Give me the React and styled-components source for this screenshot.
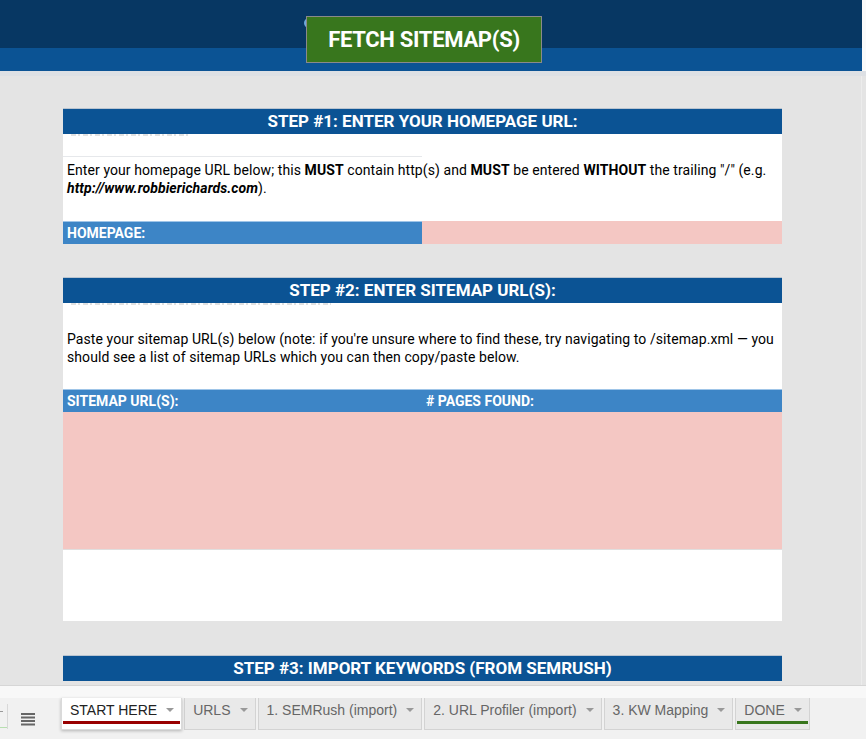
import React from "react";
import styled, { createGlobalStyle } from "styled-components";

const GlobalStyle = createGlobalStyle`
  html, body { margin: 0; padding: 0; }
  body { background: #e4e4e4; overflow: hidden; font-family: Roboto, "Liberation Sans", Arial, sans-serif; }
  * { box-sizing: border-box; }
`;

const Page = styled.div`
  width: 866px;
  height: 739px;
  display: flex;
  flex-direction: column;
  overflow: hidden;
`;

const Top = styled.header`
  position: relative;
  display: flex;
  flex-direction: column;
  width: 866px;
  padding-right: 4px;
  background: #fafafa;
`;

const DarkBand = styled.div`
  height: 48px;
  background: #073763;
`;

const BlueBand = styled.div`
  height: 23px;
  background: #0b5394;
`;

const TopRule = styled.div`
  height: 5px;
  background: #dde0e4;
  margin-right: -4px;
`;

const FetchButton = styled.button`
  position: absolute;
  left: 306px;
  top: 16px;
  width: 236px;
  height: 47px;
  background: #38761d;
  border: 1px solid #8a8a8a;
  color: #fff;
  font-family: Roboto, "Liberation Sans", sans-serif;
  font-weight: 700;
  font-size: 22px;
  letter-spacing: -0.3px;
  padding: 0;
  cursor: pointer;
`;

const Peek = styled.span`
  position: absolute;
  left: 304px;
  top: 18px;
  width: 6px;
  height: 10px;
  border-radius: 5px 0 0 5px;
  background: #6fa8dc;
`;

const Main = styled.main`
  flex: 1;
  display: flex;
  flex-direction: column;
  gap: 34px;
  padding: 32px 0 0 63px;
  background: #e4e4e4;
  border-bottom: 1px solid #d6d6d6;
  overflow: hidden;
  box-shadow: inset -4px 0 0 #e4e4e4, inset -5px 0 0 #ececec;
`;

const Card = styled.section`
  width: 719px;
  display: flex;
  flex-direction: column;
  flex-shrink: 0;
`;

const StepHeader = styled.h2`
  margin: 0;
  height: 26px;
  background: #0b5394;
  border-top: 1px solid #b9c4d0;
  color: #fff;
  font-size: 17px;
  font-weight: 700;
  text-align: center;
  line-height: 25px;
  flex-shrink: 0;
`;

const Body = styled.div`
  background: #fff;
  height: ${(p) => p.$h}px;
  display: flex;
  flex-direction: column;
`;

const Sliver = styled.div`
  height: 2px;
  width: ${(p) => p.$w}px;
  margin-left: 8px;
  background: repeating-linear-gradient(90deg, #d4d4d4 0 5px, transparent 5px 7px, #d4d4d4 7px 9px, transparent 9px 12px);
  opacity: 0.7;
`;

const GridLine = styled.div`
  height: 1px;
  width: 359px;
  background: #e6e8eb;
  margin-top: ${(p) => p.$top}px;
`;

const Para = styled.p`
  margin: ${(p) => p.$top}px 0 0;
  padding: 0 0 0 4px;
  font-size: 14px;
  line-height: 18px;
  color: #000;
  letter-spacing: 0.08px;
  b { font-weight: 700; }
  i { font-weight: 700; font-style: italic; }
`;

const Row = styled.div`
  display: grid;
  grid-template-columns: 359px 360px;
  height: ${(p) => p.$h}px;
`;

const Cell = styled.div`
  background: ${(p) => (p.$pink ? "#f4c7c3" : "#3d85c6")};
  color: #fff;
  font-size: 14px;
  font-weight: 700;
  padding: 0 4px;
  line-height: ${(p) => p.$h}px;
  border-top: ${(p) => (p.$line ? "1px solid #9fc5e8" : "none")};
`;

const PinkArea = styled.div`
  height: 138px;
  background: #f4c7c3;
  border-bottom: 1px solid #e0dede;
`;

const WhiteArea = styled.div`
  height: 71px;
  background: #fff;
`;

const Strip = styled.div`
  height: 13px;
  background: #f8f8f8;
  border-bottom: 1px solid #c9c9c9;
`;

const TabBar = styled.nav`
  height: 41px;
  background: #f1f1f1;
  display: flex;
  align-items: flex-start;
  margin-top: -1px;
  font-family: "Liberation Sans", Arial, sans-serif;
`;

const LeftTools = styled.div`
  width: 61px;
  height: 32px;
  display: flex;
  align-items: center;
  position: relative;
`;

const Sep = styled.div`
  width: 1px;
  height: 25px;
  background: #d8d8d8;
  margin: 5px 0 0 7px;
`;

const Plus = styled.span`
  position: absolute;
  left: 0;
  top: 13px;
  width: 3px;
  height: 1px;
  background: #999;
`;

const GreenBit = styled.span`
  position: absolute;
  left: 0;
  top: 29px;
  width: 7px;
  height: 1px;
  background: #b7dfb0;
`;

const Burger = styled.svg`
  margin: 9px 0 0 13px;
`;

const Tabs = styled.div`
  display: flex;
  gap: 2px;
`;

const Tab = styled.div`
  height: 32px;
  display: flex;
  flex-direction: column;
  padding: 3px 0 5px;
  background: ${(p) => (p.$active ? "#fff" : "#e9e9e9")};
  border: 1px solid ${(p) => (p.$active ? "#dadada" : "#d3d3d3")};
  border-top: none;
  box-shadow: ${(p) => (p.$active ? "0 1px 3px rgba(0,0,0,0.25)" : "none")};
  position: relative;
  z-index: ${(p) => (p.$active ? 1 : 0)};
`;

const TabLabel = styled.div`
  display: flex;
  align-items: center;
  gap: 9px;
  height: 18px;
  padding: 0 7px 0 8px;
  font-size: 14px;
  color: ${(p) => (p.$active ? "#222" : "#666")};
  white-space: nowrap;
`;

const Caret = styled.span`
  width: 0;
  height: 0;
  border-left: 4px solid transparent;
  border-right: 4px solid transparent;
  border-top: 4px solid #999;
  margin-top: 1px;
`;

const Underline = styled.div`
  height: 3px;
  margin: 3px 1px 0;
  background: ${(p) => p.$color || "transparent"};
`;

const tabs = [
  { label: "START HERE", active: true, color: "#990000" },
  { label: "URLS" },
  { label: "1. SEMRush (import)" },
  { label: "2. URL Profiler (import)" },
  { label: "3. KW Mapping" },
  { label: "DONE", color: "#38761d" },
];

export default function App() {
  return (
    <Page>
      <GlobalStyle />
      <Top>
        <DarkBand />
        <BlueBand />
        <TopRule />
        <Peek />
        <FetchButton>FETCH SITEMAP(S)</FetchButton>
      </Top>
      <Main>
        <Card>
          <StepHeader>STEP #1: ENTER YOUR HOMEPAGE URL:</StepHeader>
          <Body $h={87}>
            <Sliver $w={120} />
            <GridLine $top={20} />
            <Para $top={4}>
              Enter your homepage URL below; this <b>MUST</b> contain http(s) and <b>MUST</b> be entered{" "}
              <b>WITHOUT</b> the trailing "/" (e.g. <i>http://www.robbierichards.com</i>).
            </Para>
          </Body>
          <Row $h={22}>
            <Cell $h={22} $line>HOMEPAGE:</Cell>
            <Cell $h={22} $pink></Cell>
          </Row>
        </Card>

        <Card>
          <StepHeader>STEP #2: ENTER SITEMAP URL(S):</StepHeader>
          <Body $h={86}>
            <Sliver $w={260} />
            <Para $top={25}>
              Paste your sitemap URL(s) below (note: if you're unsure where to find these, try navigating to
              /sitemap.xml — you should see a list of sitemap URLs which you can then copy/paste below.
            </Para>
          </Body>
          <Row $h={23}>
            <Cell $h={23} $line>SITEMAP URL(S):</Cell>
            <Cell $h={23} $line>
              # PAGES FOUND:
            </Cell>
          </Row>
          <PinkArea />
          <WhiteArea />
        </Card>

        <Card>
          <StepHeader>STEP #3: IMPORT KEYWORDS (FROM SEMRUSH)</StepHeader>
        </Card>
      </Main>
      <Strip />
      <TabBar>
        <LeftTools>
          <Plus />
          <GreenBit />
          <Sep />
          <Burger width="14" height="14" viewBox="0 0 14 14">
            <rect x="0" y="1" width="14" height="2" fill="#666" />
            <rect x="0" y="4.5" width="14" height="2" fill="#666" />
            <rect x="0" y="8" width="14" height="2" fill="#666" />
            <rect x="0" y="11.5" width="14" height="2" fill="#666" />
          </Burger>
        </LeftTools>
        <Tabs>
          {tabs.map((t) => (
            <Tab key={t.label} $active={t.active}>
              <TabLabel $active={t.active}>
                {t.label}
                <Caret />
              </TabLabel>
              <Underline $color={t.color} />
            </Tab>
          ))}
        </Tabs>
      </TabBar>
    </Page>
  );
}
